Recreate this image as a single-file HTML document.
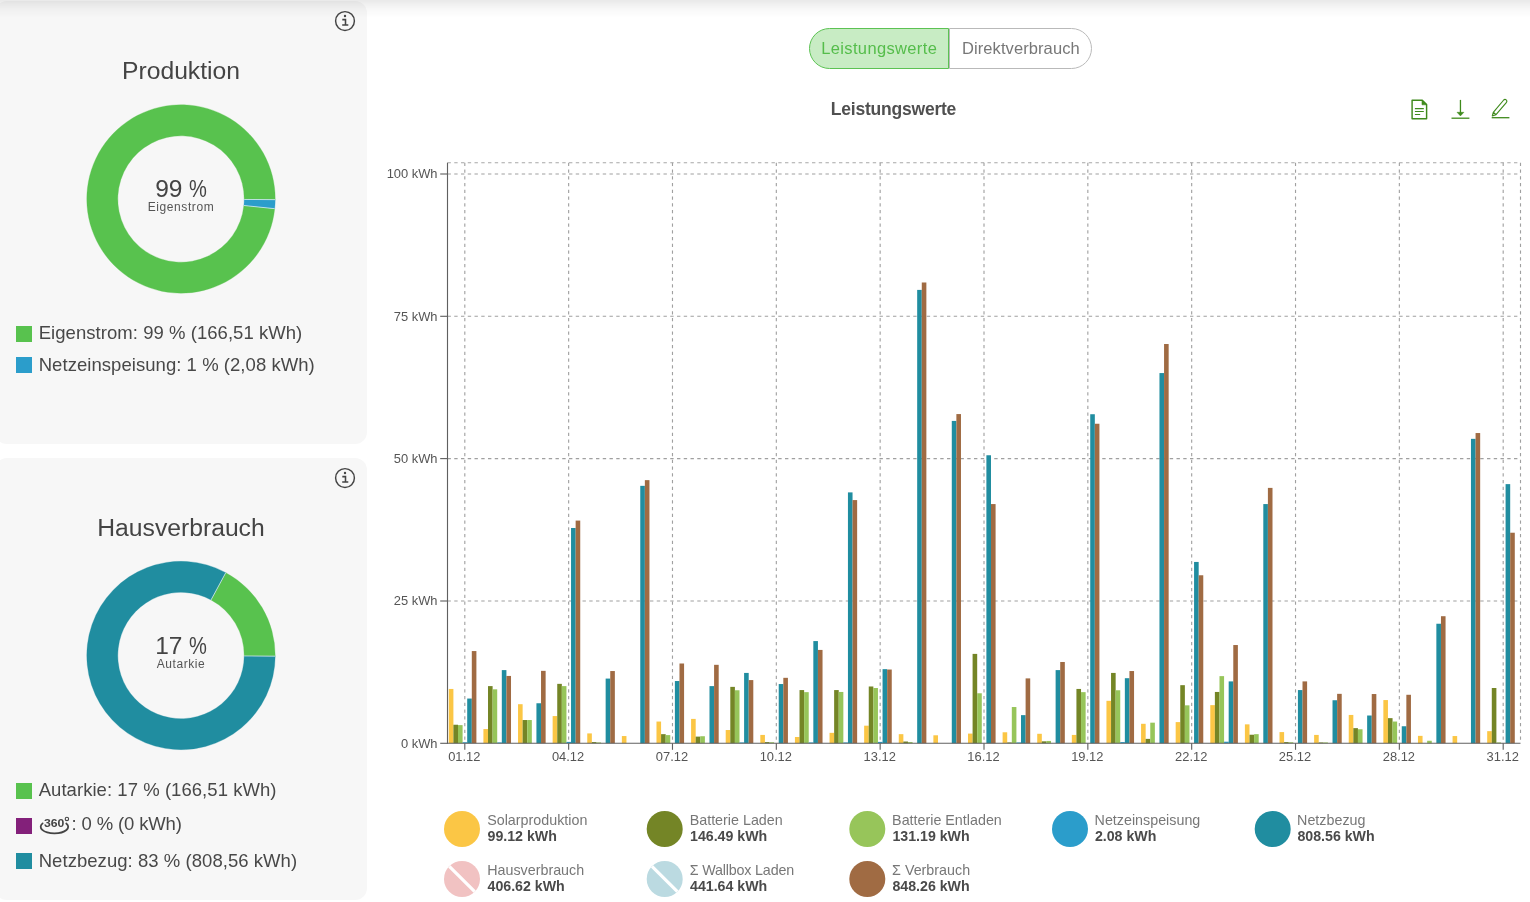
<!DOCTYPE html>
<html lang="de"><head><meta charset="utf-8"><title>Leistungswerte</title>
<style>
html,body{margin:0;padding:0;background:#fff}
body{width:1530px;height:902px;position:relative;overflow:hidden;font-family:"Liberation Sans", sans-serif;color:#444}
#root{position:absolute;left:0;top:0;width:1530px;height:902px;will-change:transform}
.card{position:absolute;left:-5px;width:372px;background:#f7f7f7;border-radius:12px}
.shadow{position:absolute;left:0;top:0;width:1530px;height:18px;background:linear-gradient(rgba(0,0,0,.088),rgba(0,0,0,.028) 50%,rgba(0,0,0,0))}
.info{position:absolute}
.ttl{position:absolute;left:0;width:362px;text-align:center;font-size:24.7px;line-height:30px;color:#444;white-space:nowrap}
.big{position:absolute;left:81px;width:200px;text-align:center;font-size:24.5px;letter-spacing:-.15px;line-height:28px;color:#444}
.pc{display:inline-block;transform:scaleX(.82);transform-origin:0 50%;margin-right:-3.9px}
.small{position:absolute;left:81px;width:200px;text-align:center;font-size:12px;letter-spacing:.58px;line-height:15px;color:#555}
.sq{position:absolute;left:16px;width:16px;height:16px}
.lg{position:absolute;left:38.7px;letter-spacing:.05px;font-size:18.5px;line-height:22px;color:#484848;white-space:nowrap}
.seg{position:absolute;left:809px;top:28px;width:283px;height:41px;box-sizing:border-box;display:flex;font-size:16.5px;line-height:41px;white-space:nowrap}
.t1{position:absolute;left:12.2px;top:0;color:#55bd4b;letter-spacing:.36px}
.t2{position:absolute;left:153px;top:0;color:#777;letter-spacing:.085px}
.b1{box-sizing:border-box;width:140px;height:41px;border:1px solid #5cc253;border-radius:20.5px 0 0 20.5px;background:#c8ecc4;color:#55bd4b;text-align:center;padding-left:2px}
.b2{box-sizing:border-box;width:143px;height:41px;border:1px solid #b9b9b9;border-radius:0 20.5px 20.5px 0;background:#fff;color:#777;text-align:center;padding-right:2px}
.ctitle{position:absolute;left:693.5px;width:400px;top:98.4px;text-align:center;font-size:17.5px;letter-spacing:-.22px;font-weight:bold;line-height:22px;color:#505050;white-space:nowrap}
</style></head><body><div id="root">

<div class="card" style="top:1px;height:443px"></div>
<div class="card" style="top:458px;height:442px"></div>
<svg width="383" height="902" viewBox="0 0 383 902" style="position:absolute;left:0;top:0">
<path d="M274.70 208.68A94.2 94.2 0 1 1 275.20 199.66L244.20 199.44A63.2 63.2 0 1 0 243.87 205.50Z" fill="#58C24E" stroke="#58C24E" stroke-width="0.3"/>
<path d="M275.20 199.66A94.2 94.2 0 0 1 274.70 208.68L243.87 205.50A63.2 63.2 0 0 0 244.20 199.44Z" fill="#2B9DCB" stroke="#2B9DCB" stroke-width="0.3"/>
<line x1="274.70" y1="208.68" x2="243.87" y2="205.50" stroke="#fff" stroke-opacity="0.7" stroke-width="0.9"/>
<line x1="275.20" y1="199.66" x2="244.20" y2="199.44" stroke="#fff" stroke-opacity="0.7" stroke-width="0.9"/>
<path d="M225.80 572.64A94.2 94.2 0 0 1 275.20 656.16L244.20 655.94A63.2 63.2 0 0 0 211.06 599.91Z" fill="#58C24E" stroke="#58C24E" stroke-width="0.3"/>
<path d="M275.20 656.16A94.2 94.2 0 1 1 225.80 572.64L211.06 599.91A63.2 63.2 0 1 0 244.20 655.94Z" fill="#208DA0" stroke="#208DA0" stroke-width="0.3"/>
<line x1="225.80" y1="572.64" x2="211.06" y2="599.91" stroke="#fff" stroke-opacity="0.7" stroke-width="0.9"/>
<line x1="275.20" y1="656.16" x2="244.20" y2="655.94" stroke="#fff" stroke-opacity="0.7" stroke-width="0.9"/>
</svg>
<svg class="info" style="left:332.8px;top:8.9px" width="24" height="24" viewBox="0 0 24 24"><circle cx="12" cy="12" r="9.4" fill="none" stroke="#444" stroke-width="1.45"/><circle cx="12" cy="7.05" r="1.2" fill="#444"/><path d="M9.3 10.6H12.5V15.7M9.2 15.9H15.3" fill="none" stroke="#444" stroke-width="1.55"/></svg>
<svg class="info" style="left:332.8px;top:465.9px" width="24" height="24" viewBox="0 0 24 24"><circle cx="12" cy="12" r="9.4" fill="none" stroke="#444" stroke-width="1.45"/><circle cx="12" cy="7.05" r="1.2" fill="#444"/><path d="M9.3 10.6H12.5V15.7M9.2 15.9H15.3" fill="none" stroke="#444" stroke-width="1.55"/></svg>
<div class="ttl" style="top:56px">Produktion</div>
<div class="ttl" style="top:513px">Hausverbrauch</div>
<div class="big" style="top:175px">99 <span class="pc">%</span></div>
<div class="small" style="top:200.2px">Eigenstrom</div>
<div class="big" style="top:632px">17 <span class="pc">%</span></div>
<div class="small" style="top:657.2px">Autarkie</div>
<div class="sq" style="top:326px;background:#58C24E"></div><div class="lg" style="top:322px">Eigenstrom: 99 % (166,51 kWh)</div>
<div class="sq" style="top:357px;background:#2B9DCB"></div><div class="lg" style="top:353.5px">Netzeinspeisung: 1 % (2,08 kWh)</div>
<div class="sq" style="top:783px;background:#58C24E"></div><div class="lg" style="top:778.5px">Autarkie: 17 % (166,51 kWh)</div>
<div class="sq" style="top:818px;background:#83207A"></div>
<svg style="position:absolute;left:38px;top:814px" width="34" height="22" viewBox="0 0 34 22"><text x="6" y="13.2" font-family='"Liberation Sans", sans-serif' font-size="11.3" font-weight="bold" fill="#444" textLength="20.4" lengthAdjust="spacingAndGlyphs">360</text><circle cx="28.9" cy="4.9" r="1.7" fill="none" stroke="#444" stroke-width="1.1"/><path d="M4.6 9.4C-0.5 13.6 5 19.3 16.4 19.3C27.5 19.3 33.5 13.8 28.3 9.5" fill="none" stroke="#444" stroke-width="1.8" stroke-linecap="round"/></svg>
<div class="lg" style="top:813.4px;left:71.6px;letter-spacing:-.15px">: 0 % (0 kWh)</div>
<div class="sq" style="top:853px;background:#208DA0"></div><div class="lg" style="top:850px">Netzbezug: 83 % (808,56 kWh)</div>


<div class="seg"><div class="b1"></div><div class="b2"></div><span class="t1">Leistungswerte</span><span class="t2">Direktverbrauch</span></div>
<div class="ctitle">Leistungswerte</div>
<svg style="position:absolute;left:1405px;top:95px" width="112" height="30" viewBox="0 0 112 30" fill="none" stroke="#3f8a1c" stroke-width="1.3">
<path d="M7.1 5.2H17.3L21.6 9.6V23.8H7.1Z" stroke-width="1.45" stroke-linejoin="round"/><path d="M17 5.4V9.8H21.4Z" fill="#3f8a1c" stroke-width="0.6"/><path d="M9.9 13.6H18.8M9.9 16.5H18.8M9.9 19.5H15.2" stroke-width="1.1"/>
<path d="M55.45 4.9V18"/><path d="M52 17.3H58.9L55.45 20.9Z" fill="#3f8a1c" stroke-width="0.5"/><path d="M46.5 23.2H64.4"/>
<path d="M87.3 20.9L88.3 17.3L98.7 5A1.85 1.85 0 0 1 101.5 7.4L91 19.7ZM88.3 17.3L91 19.7" stroke-width="1.15" stroke-linejoin="round"/><path d="M86.7 22.7H104.4"/>
</svg>

<svg width="1530" height="902" viewBox="0 0 1530 902" style="position:absolute;left:0;top:0">
<g stroke="#a0a0a0" stroke-width="1.125" stroke-dasharray="3.375,3.375" fill="none">
<line x1="447.5" y1="601.0" x2="1520.5" y2="601.0"/>
<line x1="447.5" y1="458.6" x2="1520.5" y2="458.6"/>
<line x1="447.5" y1="316.3" x2="1520.5" y2="316.3"/>
<line x1="447.5" y1="174.0" x2="1520.5" y2="174.0"/>
<line x1="447.5" y1="162.8" x2="1520.5" y2="162.8" stroke="#a8a8a8"/>
<line x1="1520.5" y1="162.65" x2="1520.5" y2="743.3"/>
<line x1="464.81" y1="162.65" x2="464.81" y2="743.3"/>
<line x1="568.65" y1="162.65" x2="568.65" y2="743.3"/>
<line x1="672.48" y1="162.65" x2="672.48" y2="743.3"/>
<line x1="776.32" y1="162.65" x2="776.32" y2="743.3"/>
<line x1="880.16" y1="162.65" x2="880.16" y2="743.3"/>
<line x1="984.0" y1="162.65" x2="984.0" y2="743.3"/>
<line x1="1087.84" y1="162.65" x2="1087.84" y2="743.3"/>
<line x1="1191.68" y1="162.65" x2="1191.68" y2="743.3"/>
<line x1="1295.52" y1="162.65" x2="1295.52" y2="743.3"/>
<line x1="1399.35" y1="162.65" x2="1399.35" y2="743.3"/>
<line x1="1503.19" y1="162.65" x2="1503.19" y2="743.3"/>
</g>
<rect x="448.80" y="688.94" width="4.6" height="54.36" fill="#FBC645"/>
<rect x="453.40" y="724.74" width="4.6" height="18.56" fill="#748526"/>
<rect x="458.00" y="725.12" width="4.6" height="18.18" fill="#97C55A"/>
<rect x="462.60" y="742.26" width="4.6" height="1.04" fill="#2B9DCB"/>
<rect x="467.20" y="698.55" width="4.6" height="44.75" fill="#208DA0"/>
<rect x="471.80" y="651.06" width="4.6" height="92.24" fill="#A06B43"/>
<rect x="483.41" y="729.07" width="4.6" height="14.23" fill="#FBC645"/>
<rect x="488.01" y="686.11" width="4.6" height="57.19" fill="#748526"/>
<rect x="492.61" y="689.32" width="4.6" height="53.98" fill="#97C55A"/>
<rect x="497.21" y="742.45" width="4.6" height="0.85" fill="#2B9DCB"/>
<rect x="501.81" y="670.10" width="4.6" height="73.20" fill="#208DA0"/>
<rect x="506.41" y="675.94" width="4.6" height="67.36" fill="#A06B43"/>
<rect x="518.03" y="704.20" width="4.6" height="39.10" fill="#FBC645"/>
<rect x="522.63" y="720.03" width="4.6" height="23.27" fill="#748526"/>
<rect x="527.23" y="720.03" width="4.6" height="23.27" fill="#97C55A"/>
<rect x="536.43" y="703.26" width="4.6" height="40.04" fill="#208DA0"/>
<rect x="541.03" y="670.85" width="4.6" height="72.45" fill="#A06B43"/>
<rect x="552.64" y="716.07" width="4.6" height="27.23" fill="#FBC645"/>
<rect x="557.24" y="683.85" width="4.6" height="59.45" fill="#748526"/>
<rect x="561.84" y="686.11" width="4.6" height="57.19" fill="#97C55A"/>
<rect x="566.44" y="741.89" width="4.6" height="1.41" fill="#2B9DCB"/>
<rect x="571.04" y="527.99" width="4.6" height="215.31" fill="#208DA0"/>
<rect x="575.64" y="520.59" width="4.6" height="222.71" fill="#A06B43"/>
<rect x="587.25" y="733.41" width="4.6" height="9.89" fill="#FBC645"/>
<rect x="591.85" y="742.08" width="4.6" height="1.22" fill="#748526"/>
<rect x="596.45" y="742.45" width="4.6" height="0.85" fill="#97C55A"/>
<rect x="605.65" y="678.58" width="4.6" height="64.72" fill="#208DA0"/>
<rect x="610.25" y="671.04" width="4.6" height="72.26" fill="#A06B43"/>
<rect x="621.86" y="736.05" width="4.6" height="7.25" fill="#FBC645"/>
<rect x="640.26" y="485.84" width="4.6" height="257.46" fill="#208DA0"/>
<rect x="644.86" y="480.14" width="4.6" height="263.16" fill="#A06B43"/>
<rect x="656.48" y="721.54" width="4.6" height="21.76" fill="#FBC645"/>
<rect x="661.08" y="734.16" width="4.6" height="9.14" fill="#748526"/>
<rect x="665.68" y="735.10" width="4.6" height="8.20" fill="#97C55A"/>
<rect x="674.88" y="681.03" width="4.6" height="62.27" fill="#208DA0"/>
<rect x="679.48" y="663.50" width="4.6" height="79.80" fill="#A06B43"/>
<rect x="691.09" y="718.90" width="4.6" height="24.40" fill="#FBC645"/>
<rect x="695.69" y="736.61" width="4.6" height="6.69" fill="#748526"/>
<rect x="700.29" y="736.24" width="4.6" height="7.06" fill="#97C55A"/>
<rect x="709.49" y="686.11" width="4.6" height="57.19" fill="#208DA0"/>
<rect x="714.09" y="664.82" width="4.6" height="78.48" fill="#A06B43"/>
<rect x="725.70" y="730.02" width="4.6" height="13.28" fill="#FBC645"/>
<rect x="730.30" y="686.87" width="4.6" height="56.43" fill="#748526"/>
<rect x="734.90" y="690.26" width="4.6" height="53.04" fill="#97C55A"/>
<rect x="739.50" y="742.45" width="4.6" height="0.85" fill="#2B9DCB"/>
<rect x="744.10" y="672.92" width="4.6" height="70.38" fill="#208DA0"/>
<rect x="748.70" y="680.08" width="4.6" height="63.22" fill="#A06B43"/>
<rect x="760.32" y="734.92" width="4.6" height="8.38" fill="#FBC645"/>
<rect x="764.92" y="742.08" width="4.6" height="1.22" fill="#748526"/>
<rect x="769.52" y="742.26" width="4.6" height="1.04" fill="#97C55A"/>
<rect x="778.72" y="684.04" width="4.6" height="59.26" fill="#208DA0"/>
<rect x="783.32" y="677.82" width="4.6" height="65.48" fill="#A06B43"/>
<rect x="794.93" y="736.99" width="4.6" height="6.31" fill="#FBC645"/>
<rect x="799.53" y="690.07" width="4.6" height="53.23" fill="#748526"/>
<rect x="804.13" y="692.14" width="4.6" height="51.16" fill="#97C55A"/>
<rect x="808.73" y="742.45" width="4.6" height="0.85" fill="#2B9DCB"/>
<rect x="813.33" y="641.08" width="4.6" height="102.22" fill="#208DA0"/>
<rect x="817.93" y="649.93" width="4.6" height="93.37" fill="#A06B43"/>
<rect x="829.54" y="732.84" width="4.6" height="10.46" fill="#FBC645"/>
<rect x="834.14" y="690.07" width="4.6" height="53.23" fill="#748526"/>
<rect x="838.74" y="691.95" width="4.6" height="51.35" fill="#97C55A"/>
<rect x="843.34" y="742.45" width="4.6" height="0.85" fill="#2B9DCB"/>
<rect x="847.94" y="492.39" width="4.6" height="250.91" fill="#208DA0"/>
<rect x="852.54" y="500.08" width="4.6" height="243.22" fill="#A06B43"/>
<rect x="864.15" y="725.68" width="4.6" height="17.62" fill="#FBC645"/>
<rect x="868.75" y="686.49" width="4.6" height="56.81" fill="#748526"/>
<rect x="873.35" y="688.00" width="4.6" height="55.30" fill="#97C55A"/>
<rect x="877.95" y="741.89" width="4.6" height="1.41" fill="#2B9DCB"/>
<rect x="882.55" y="669.15" width="4.6" height="74.15" fill="#208DA0"/>
<rect x="887.15" y="669.53" width="4.6" height="73.77" fill="#A06B43"/>
<rect x="898.77" y="734.16" width="4.6" height="9.14" fill="#FBC645"/>
<rect x="903.37" y="741.51" width="4.6" height="1.79" fill="#748526"/>
<rect x="907.97" y="742.08" width="4.6" height="1.22" fill="#97C55A"/>
<rect x="917.17" y="289.90" width="4.6" height="453.40" fill="#208DA0"/>
<rect x="921.77" y="282.49" width="4.6" height="460.81" fill="#A06B43"/>
<rect x="933.38" y="735.29" width="4.6" height="8.01" fill="#FBC645"/>
<rect x="951.78" y="420.91" width="4.6" height="322.39" fill="#208DA0"/>
<rect x="956.38" y="414.07" width="4.6" height="329.23" fill="#A06B43"/>
<rect x="967.99" y="733.60" width="4.6" height="9.70" fill="#FBC645"/>
<rect x="972.59" y="653.89" width="4.6" height="89.41" fill="#748526"/>
<rect x="977.19" y="693.27" width="4.6" height="50.03" fill="#97C55A"/>
<rect x="986.39" y="455.25" width="4.6" height="288.05" fill="#208DA0"/>
<rect x="990.99" y="504.07" width="4.6" height="239.23" fill="#A06B43"/>
<rect x="1002.61" y="732.28" width="4.6" height="11.02" fill="#FBC645"/>
<rect x="1007.21" y="742.45" width="4.6" height="0.85" fill="#748526"/>
<rect x="1011.81" y="707.03" width="4.6" height="36.27" fill="#97C55A"/>
<rect x="1016.41" y="742.45" width="4.6" height="0.85" fill="#2B9DCB"/>
<rect x="1021.01" y="715.13" width="4.6" height="28.17" fill="#208DA0"/>
<rect x="1025.61" y="678.39" width="4.6" height="64.91" fill="#A06B43"/>
<rect x="1037.22" y="733.79" width="4.6" height="9.51" fill="#FBC645"/>
<rect x="1041.82" y="741.32" width="4.6" height="1.98" fill="#748526"/>
<rect x="1046.42" y="740.95" width="4.6" height="2.35" fill="#97C55A"/>
<rect x="1055.62" y="670.10" width="4.6" height="73.20" fill="#208DA0"/>
<rect x="1060.22" y="661.99" width="4.6" height="81.31" fill="#A06B43"/>
<rect x="1071.83" y="734.92" width="4.6" height="8.38" fill="#FBC645"/>
<rect x="1076.43" y="688.94" width="4.6" height="54.36" fill="#748526"/>
<rect x="1081.03" y="692.14" width="4.6" height="51.16" fill="#97C55A"/>
<rect x="1090.23" y="414.24" width="4.6" height="329.06" fill="#208DA0"/>
<rect x="1094.83" y="423.75" width="4.6" height="319.55" fill="#A06B43"/>
<rect x="1106.45" y="700.81" width="4.6" height="42.49" fill="#FBC645"/>
<rect x="1111.05" y="672.92" width="4.6" height="70.38" fill="#748526"/>
<rect x="1115.65" y="690.26" width="4.6" height="53.04" fill="#97C55A"/>
<rect x="1120.25" y="742.08" width="4.6" height="1.22" fill="#2B9DCB"/>
<rect x="1124.85" y="678.20" width="4.6" height="65.10" fill="#208DA0"/>
<rect x="1129.45" y="671.04" width="4.6" height="72.26" fill="#A06B43"/>
<rect x="1141.06" y="723.80" width="4.6" height="19.50" fill="#FBC645"/>
<rect x="1145.66" y="738.87" width="4.6" height="4.43" fill="#748526"/>
<rect x="1150.26" y="722.67" width="4.6" height="20.63" fill="#97C55A"/>
<rect x="1159.46" y="373.06" width="4.6" height="370.24" fill="#208DA0"/>
<rect x="1164.06" y="344.01" width="4.6" height="399.29" fill="#A06B43"/>
<rect x="1175.67" y="722.10" width="4.6" height="21.20" fill="#FBC645"/>
<rect x="1180.27" y="685.17" width="4.6" height="58.13" fill="#748526"/>
<rect x="1184.87" y="705.33" width="4.6" height="37.97" fill="#97C55A"/>
<rect x="1194.07" y="561.94" width="4.6" height="181.36" fill="#208DA0"/>
<rect x="1198.67" y="575.27" width="4.6" height="168.03" fill="#A06B43"/>
<rect x="1210.28" y="705.14" width="4.6" height="38.16" fill="#FBC645"/>
<rect x="1214.88" y="691.95" width="4.6" height="51.35" fill="#748526"/>
<rect x="1219.48" y="676.13" width="4.6" height="67.17" fill="#97C55A"/>
<rect x="1224.08" y="741.70" width="4.6" height="1.60" fill="#2B9DCB"/>
<rect x="1228.68" y="681.40" width="4.6" height="61.90" fill="#208DA0"/>
<rect x="1233.28" y="645.03" width="4.6" height="98.27" fill="#A06B43"/>
<rect x="1244.90" y="724.36" width="4.6" height="18.94" fill="#FBC645"/>
<rect x="1249.50" y="734.73" width="4.6" height="8.57" fill="#748526"/>
<rect x="1254.10" y="734.16" width="4.6" height="9.14" fill="#97C55A"/>
<rect x="1263.30" y="504.07" width="4.6" height="239.23" fill="#208DA0"/>
<rect x="1267.90" y="487.89" width="4.6" height="255.41" fill="#A06B43"/>
<rect x="1279.51" y="732.09" width="4.6" height="11.21" fill="#FBC645"/>
<rect x="1284.11" y="742.08" width="4.6" height="1.22" fill="#748526"/>
<rect x="1288.71" y="742.26" width="4.6" height="1.04" fill="#97C55A"/>
<rect x="1297.91" y="690.07" width="4.6" height="53.23" fill="#208DA0"/>
<rect x="1302.51" y="681.40" width="4.6" height="61.90" fill="#A06B43"/>
<rect x="1314.12" y="734.92" width="4.6" height="8.38" fill="#FBC645"/>
<rect x="1318.72" y="742.45" width="4.6" height="0.85" fill="#748526"/>
<rect x="1323.32" y="742.45" width="4.6" height="0.85" fill="#97C55A"/>
<rect x="1332.52" y="700.24" width="4.6" height="43.06" fill="#208DA0"/>
<rect x="1337.12" y="693.84" width="4.6" height="49.46" fill="#A06B43"/>
<rect x="1348.74" y="714.94" width="4.6" height="28.36" fill="#FBC645"/>
<rect x="1353.34" y="728.13" width="4.6" height="15.17" fill="#748526"/>
<rect x="1357.94" y="729.26" width="4.6" height="14.04" fill="#97C55A"/>
<rect x="1367.14" y="715.51" width="4.6" height="27.79" fill="#208DA0"/>
<rect x="1371.74" y="694.03" width="4.6" height="49.27" fill="#A06B43"/>
<rect x="1383.35" y="700.06" width="4.6" height="43.24" fill="#FBC645"/>
<rect x="1387.95" y="718.15" width="4.6" height="25.15" fill="#748526"/>
<rect x="1392.55" y="721.54" width="4.6" height="21.76" fill="#97C55A"/>
<rect x="1401.75" y="726.25" width="4.6" height="17.05" fill="#208DA0"/>
<rect x="1406.35" y="694.78" width="4.6" height="48.52" fill="#A06B43"/>
<rect x="1417.96" y="735.86" width="4.6" height="7.44" fill="#FBC645"/>
<rect x="1427.16" y="740.76" width="4.6" height="2.54" fill="#97C55A"/>
<rect x="1436.36" y="623.74" width="4.6" height="119.56" fill="#208DA0"/>
<rect x="1440.96" y="616.21" width="4.6" height="127.09" fill="#A06B43"/>
<rect x="1452.57" y="736.05" width="4.6" height="7.25" fill="#FBC645"/>
<rect x="1470.97" y="438.85" width="4.6" height="304.45" fill="#208DA0"/>
<rect x="1475.57" y="433.04" width="4.6" height="310.26" fill="#A06B43"/>
<rect x="1487.19" y="731.15" width="4.6" height="12.15" fill="#FBC645"/>
<rect x="1491.79" y="688.00" width="4.6" height="55.30" fill="#748526"/>
<rect x="1496.39" y="742.45" width="4.6" height="0.85" fill="#97C55A"/>
<rect x="1505.59" y="484.13" width="4.6" height="259.17" fill="#208DA0"/>
<rect x="1510.19" y="532.72" width="4.6" height="210.58" fill="#A06B43"/>
<g stroke="#606060" stroke-width="1.125" fill="none">
<line x1="447.5" y1="162.65" x2="447.5" y2="743.8599999999999"/>
<line x1="446.94" y1="743.3" x2="1520.5" y2="743.3"/>
<line x1="440.2" y1="743.3" x2="447.5" y2="743.3"/>
<line x1="440.2" y1="601.0" x2="447.5" y2="601.0"/>
<line x1="440.2" y1="458.6" x2="447.5" y2="458.6"/>
<line x1="440.2" y1="316.3" x2="447.5" y2="316.3"/>
<line x1="440.2" y1="174.0" x2="447.5" y2="174.0"/>
<line x1="464.81" y1="743.3" x2="464.81" y2="749.8"/>
<line x1="568.65" y1="743.3" x2="568.65" y2="749.8"/>
<line x1="672.48" y1="743.3" x2="672.48" y2="749.8"/>
<line x1="776.32" y1="743.3" x2="776.32" y2="749.8"/>
<line x1="880.16" y1="743.3" x2="880.16" y2="749.8"/>
<line x1="984.0" y1="743.3" x2="984.0" y2="749.8"/>
<line x1="1087.84" y1="743.3" x2="1087.84" y2="749.8"/>
<line x1="1191.68" y1="743.3" x2="1191.68" y2="749.8"/>
<line x1="1295.52" y1="743.3" x2="1295.52" y2="749.8"/>
<line x1="1399.35" y1="743.3" x2="1399.35" y2="749.8"/>
<line x1="1503.19" y1="743.3" x2="1503.19" y2="749.8"/>
</g>
<g font-family='"Liberation Sans", sans-serif' font-size="12.9" fill="#555">
<text x="437.5" y="747.7" text-anchor="end">0 kWh</text>
<text x="437.5" y="605.4" text-anchor="end">25 kWh</text>
<text x="437.5" y="463.0" text-anchor="end">50 kWh</text>
<text x="437.5" y="320.7" text-anchor="end">75 kWh</text>
<text x="437.5" y="178.4" text-anchor="end">100 kWh</text>
<text x="464.3" y="761" text-anchor="middle">01.12</text>
<text x="568.1" y="761" text-anchor="middle">04.12</text>
<text x="672.0" y="761" text-anchor="middle">07.12</text>
<text x="775.8" y="761" text-anchor="middle">10.12</text>
<text x="879.7" y="761" text-anchor="middle">13.12</text>
<text x="983.5" y="761" text-anchor="middle">16.12</text>
<text x="1087.3" y="761" text-anchor="middle">19.12</text>
<text x="1191.2" y="761" text-anchor="middle">22.12</text>
<text x="1295.0" y="761" text-anchor="middle">25.12</text>
<text x="1398.9" y="761" text-anchor="middle">28.12</text>
<text x="1502.7" y="761" text-anchor="middle">31.12</text>
</g>
<circle cx="462.0" cy="829" r="18" fill="#FBC645"/>
<text x="487.2" y="825" font-family='"Liberation Sans", sans-serif' font-size="14.3" fill="#777">Solarproduktion</text>
<text x="487.5" y="840.8" font-family='"Liberation Sans", sans-serif' font-size="14.2" font-weight="bold" fill="#4a4a4a">99.12 kWh</text>
<circle cx="664.7" cy="829" r="18" fill="#748526"/>
<text x="689.7" y="825" font-family='"Liberation Sans", sans-serif' font-size="14.3" fill="#777">Batterie Laden</text>
<text x="690.0" y="840.8" font-family='"Liberation Sans", sans-serif' font-size="14.2" font-weight="bold" fill="#4a4a4a">146.49 kWh</text>
<circle cx="867.3" cy="829" r="18" fill="#97C55A"/>
<text x="892.1" y="825" font-family='"Liberation Sans", sans-serif' font-size="14.3" fill="#777">Batterie Entladen</text>
<text x="892.4" y="840.8" font-family='"Liberation Sans", sans-serif' font-size="14.2" font-weight="bold" fill="#4a4a4a">131.19 kWh</text>
<circle cx="1070.0" cy="829" r="18" fill="#2B9DCB"/>
<text x="1094.6" y="825" font-family='"Liberation Sans", sans-serif' font-size="14.3" fill="#777">Netzeinspeisung</text>
<text x="1094.9" y="840.8" font-family='"Liberation Sans", sans-serif' font-size="14.2" font-weight="bold" fill="#4a4a4a">2.08 kWh</text>
<circle cx="1272.7" cy="829" r="18" fill="#208DA0"/>
<text x="1297.1" y="825" font-family='"Liberation Sans", sans-serif' font-size="14.3" fill="#777">Netzbezug</text>
<text x="1297.4" y="840.8" font-family='"Liberation Sans", sans-serif' font-size="14.2" font-weight="bold" fill="#4a4a4a">808.56 kWh</text>
<circle cx="462.0" cy="879" r="18" fill="#F1C2C2"/>
<line x1="449.3" y1="866.3" x2="474.7" y2="891.7" stroke="#fff" stroke-width="3.2"/>
<text x="487.2" y="875" font-family='"Liberation Sans", sans-serif' font-size="14.3" fill="#777">Hausverbrauch</text>
<text x="487.5" y="890.8" font-family='"Liberation Sans", sans-serif' font-size="14.2" font-weight="bold" fill="#4a4a4a">406.62 kWh</text>
<circle cx="664.7" cy="879" r="18" fill="#BBDAE1"/>
<line x1="652.0" y1="866.3" x2="677.4" y2="891.7" stroke="#fff" stroke-width="3.2"/>
<text x="689.7" y="875" font-family='"Liberation Sans", sans-serif' font-size="14.3" fill="#777" letter-spacing="-0.17">Σ Wallbox Laden</text>
<text x="690.0" y="890.8" font-family='"Liberation Sans", sans-serif' font-size="14.2" font-weight="bold" fill="#4a4a4a">441.64 kWh</text>
<circle cx="867.3" cy="879" r="18" fill="#A06B43"/>
<text x="892.1" y="875" font-family='"Liberation Sans", sans-serif' font-size="14.3" fill="#777">Σ Verbrauch</text>
<text x="892.4" y="890.8" font-family='"Liberation Sans", sans-serif' font-size="14.2" font-weight="bold" fill="#4a4a4a">848.26 kWh</text>
</svg>
<div class="shadow"></div>
</div></body></html>
